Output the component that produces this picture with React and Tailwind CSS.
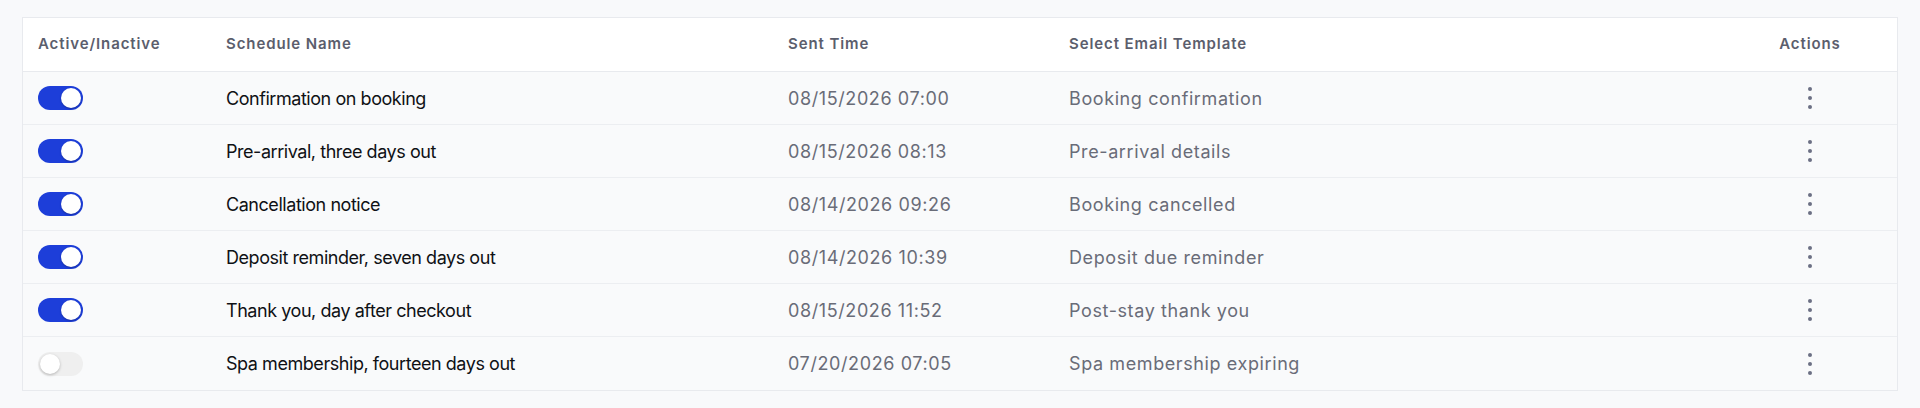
import React from "react";

const rows = [
  { on: true, name: "Confirmation on booking", time: "08/15/2026 07:00", tpl: "Booking confirmation" },
  { on: true, name: "Pre-arrival, three days out", time: "08/15/2026 08:13", tpl: "Pre-arrival details" },
  { on: true, name: "Cancellation notice", time: "08/14/2026 09:26", tpl: "Booking cancelled" },
  { on: true, name: "Deposit reminder, seven days out", time: "08/14/2026 10:39", tpl: "Deposit due reminder" },
  { on: true, name: "Thank you, day after checkout", time: "08/15/2026 11:52", tpl: "Post-stay thank you" },
  { on: false, name: "Spa membership, fourteen days out", time: "07/20/2026 07:05", tpl: "Spa membership expiring" },
];

function Toggle({ on }) {
  return on ? (
    <div className="flex h-6 w-[45px] items-center justify-end rounded-full bg-[#1d3ed9] px-[2px]">
      <div className="h-5 w-5 rounded-full bg-white shadow-[0_1px_2px_rgba(0,0,0,0.25)]" />
    </div>
  ) : (
    <div className="flex h-6 w-[45px] items-center justify-start rounded-full bg-[#efefef] px-[2px]">
      <div className="h-5 w-5 rounded-full bg-white shadow-[0_1px_3px_rgba(0,0,0,0.25)]" />
    </div>
  );
}

function Dots() {
  return (
    <svg width="6" height="24" viewBox="0 0 6 24" className="text-[#6c6f84]">
      <circle cx="3" cy="3" r="2" fill="currentColor" />
      <circle cx="3" cy="12" r="2" fill="currentColor" />
      <circle cx="3" cy="21" r="2" fill="currentColor" />
    </svg>
  );
}

const cols = "grid grid-cols-[187px_562px_281px_1fr_174px]";

export default function App() {
  return (
    <div
      className="min-h-[408px] bg-[#f8f9fb] px-[22px] py-[17px]"
      style={{ fontFamily: "Inter, 'Noto Sans', sans-serif" }}
    >
      <div className="border border-[#e8eaee] bg-[#f9fafb]">
        <div className={`${cols} h-[54px] items-center border-b border-[#e8eaee] bg-white text-[15px] font-semibold tracking-[0.9px] text-[#5b5e6d]`}>
          <div className="pl-[15px]">Active/Inactive</div>
          <div className="pl-[16px]">Schedule Name</div>
          <div className="pl-[16px]">Sent Time</div>
          <div className="pl-[16px]">Select Email Template</div>
          <div className="text-center">Actions</div>
        </div>
        {rows.map((r, i) => (
          <div
            key={i}
            className={`${cols} h-[53px] items-center ${i < rows.length - 1 ? "border-b border-[#eceef1]" : ""}`}
          >
            <div className="pl-[15px]">
              <Toggle on={r.on} />
            </div>
            <div className="pl-[16px] text-[18px] tracking-[-0.45px] text-[#0f1115]">{r.name}</div>
            <div className="pl-[16px] text-[18px] tracking-[0.6px] text-[#696c78]">{r.time}</div>
            <div className="pl-[16px] text-[18px] tracking-[0.6px] text-[#696c78]">{r.tpl}</div>
            <div className="flex justify-center">
              <Dots />
            </div>
          </div>
        ))}
      </div>
    </div>
  );
}
